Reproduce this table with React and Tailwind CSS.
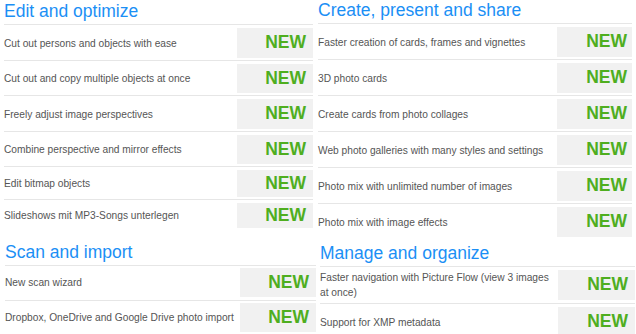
import React from 'react';

const sections = {
  edit: {
    title: 'Edit and optimize',
    head: 'pt-px',
    wrap: 'ml-[4px] w-[309px]',
    pad: 'pt-[3px] pb-[2px]',
    badge: 'w-[76px] pr-[7px]',
    rows: [
      ['Cut out persons and objects with ease', 'h-[30px]'],
      ['Cut out and copy multiple objects at once', 'h-[29px]'],
      ['Freely adjust image perspectives', 'h-[30px]'],
      ['Combine perspective and mirror effects', 'h-[29px]'],
      ['Edit bitmap objects', 'h-[27px]'],
      ['Slideshows mit MP3-Songs unterlegen', 'h-[25px]'],
    ],
  },
  scan: {
    title: 'Scan and import',
    head: 'pt-px',
    wrap: 'ml-[5px] w-[311px] mt-[11px]',
    pad: 'pt-[2px] pb-[3px]',
    badge: 'w-[76px] pr-[7px]',
    rows: [
      ['New scan wizard', 'h-[29px]'],
      ['Dropbox, OneDrive and Google Drive photo import', 'h-[29px]'],
    ],
    lastBorder: true,
  },
  create: {
    title: 'Create, present and share',
    head: 'pt-0',
    wrap: 'w-[314px]',
    pad: 'pt-[3px] pb-[2px]',
    badge: 'w-[75px] pr-[5px]',
    rows: [
      ['Faster creation of cards, frames and vignettes', 'h-[30px]'],
      ['3D photo cards', 'h-[30px]'],
      ['Create cards from photo collages', 'h-[30px]'],
      ['Web photo galleries with many styles and settings', 'h-[30px]'],
      ['Photo mix with unlimited number of images', 'h-[30px]'],
      ['Photo mix with image effects', 'h-[30px]'],
    ],
  },
  manage: {
    title: 'Manage and organize',
    head: 'pt-0',
    wrap: 'ml-[2px] w-[315px] mt-[4px]',
    pad: 'pt-[3px] pb-[3px]',
    badge: 'w-[77px] pr-[7px]',
    rows: [
      [
        <>
          Faster navigation with Picture Flow (view 3 images
          <br />
          at once)
        </>,
        'h-[30px]',
      ],
      ['Support for XMP metadata', 'h-[30px]'],
    ],
    lastBorder: true,
  },
};

function Section({ s }) {
  return (
    <div className={s.wrap}>
      <h2
        className={`${s.head} pb-[3px] leading-[20px] text-[17.5px] text-[#1b8ff5] border-b border-[#e6e6e6]`}
      >
        {s.title}
      </h2>
      {s.rows.map(([label, h], i) => {
        const last = i === s.rows.length - 1;
        return (
          <div
            key={i}
            className={`flex items-center ${s.pad} ${
              !last || s.lastBorder ? 'border-b border-[#e6e6e6]' : 'pb-0'
            }`}
          >
            <div className="flex-1 text-[10.2px] leading-[15px] text-[#555]">{label}</div>
            <div
              className={`${h} ${s.badge} shrink-0 bg-[#f1f1f1] flex items-center justify-end text-[17.5px] font-bold text-[#4fae1f] leading-none`}
            >
              NEW
            </div>
          </div>
        );
      })}
    </div>
  );
}

export default function App() {
  return (
    <div
      className="w-[636px] h-[334px] overflow-hidden bg-white flex"
      style={{ fontFamily: '"Liberation Sans", Arial, sans-serif' }}
    >
      <div className="w-[318px] shrink-0 flex flex-col">
        <Section s={sections.edit} />
        <Section s={sections.scan} />
      </div>
      <div className="flex-1 flex flex-col">
        <Section s={sections.create} />
        <Section s={sections.manage} />
      </div>
    </div>
  );
}
